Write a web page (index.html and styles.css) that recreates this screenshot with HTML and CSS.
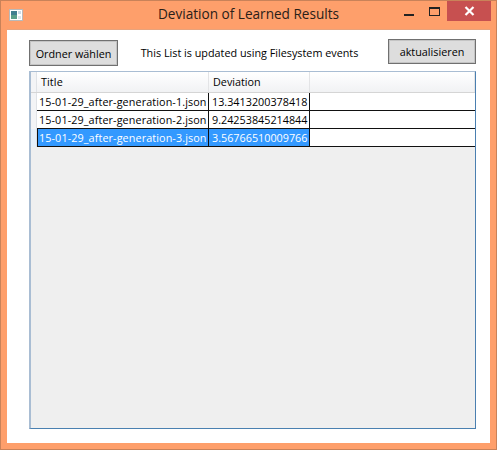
FILE: index.html
```html
<!doctype html>
<html>
<head>
 <meta http-equiv="Content-Type" content="text/html; charset=utf-8">
 <title>Deviation of Learned Results</title>
 <link rel="stylesheet" href="styles.css">
</head>

<body>
  <div class="window">
    <div class="titlebar">
      <svg class="appicon" width="14" height="12" viewBox="0 0 14 12">
        <rect x="0.5" y="0.5" width="13" height="11" fill="#fff" stroke="#b9b9b9"/>
        <rect x="2" y="2" width="6" height="8" fill="#3f7f8f"/>
        <rect x="2" y="6" width="6" height="4" fill="#5aa08a"/>
        <rect x="9" y="2" width="3" height="3" fill="#c9dbe6"/>
        <rect x="9" y="7" width="3" height="3" fill="#dbe6ec"/>
      </svg>
      <div class="wintitle">Deviation of Learned Results</div>
      <div class="controls">
        <div class="ctl"><div class="minimize"></div></div>
        <div class="ctl"><div class="maximize"></div></div>
        <div class="close">
          <svg width="11" height="10" viewBox="0 0 11 10"><path d="M1.5 1 L9.5 9 M9.5 1 L1.5 9" stroke="#fff" stroke-width="2.2"/></svg>
        </div>
      </div>
    </div>
    <div class="client">
      <div class="toolbar">
        <button class="btn btn-open">Ordner wählen</button>
        <div class="info">This List is updated using Filesystem events</div>
        <button class="btn btn-refresh">aktualisieren</button>
      </div>
      <div class="grid">
        <div class="row head">
          <div class="rowhead"></div>
          <div class="cell c1">Title</div>
          <div class="cell c2">Deviation</div>
          <div class="cell c3"></div>
        </div>
        <div class="row">
          <div class="rowhead"></div>
          <div class="cell c1">15-01-29_after-generation-1.json</div>
          <div class="cell c2">13.3413200378418</div>
          <div class="cell c3"></div>
        </div>
        <div class="row">
          <div class="rowhead"></div>
          <div class="cell c1">15-01-29_after-generation-2.json</div>
          <div class="cell c2">9.24253845214844</div>
          <div class="cell c3"></div>
        </div>
        <div class="row selected">
          <div class="rowhead"></div>
          <div class="cell c1">15-01-29_after-generation-3.json</div>
          <div class="cell c2">3.56766510009766</div>
          <div class="cell c3"></div>
        </div>
      </div>
    </div>
  </div>
</body>

</html>
```

FILE: styles.css
```css
html,body{margin:0;padding:0;}
body{width:497px;height:450px;overflow:hidden;font-family:'Open Sans','Noto Sans',sans-serif;font-size:10.8px;color:#000;}
.window{box-sizing:border-box;width:497px;height:450px;background:#fe9f6b;border:1px solid #c98259;display:flex;flex-direction:column;padding:0 6px 6px 6px;}
.titlebar{height:28px;flex:none;display:flex;align-items:center;margin:0 0 0 2px;}
.appicon{flex:none;margin:-1px 0 0 0;}
.wintitle{flex:1;text-align:center;font-size:13.6px;color:#2a2018;margin:0 0 3px 83px;}
.controls{flex:none;display:flex;align-self:flex-start;height:20px;margin:0 -1px 0 0;}
.ctl{width:28px;height:20px;position:relative;}
.minimize{position:absolute;left:13px;top:13px;width:10px;height:2px;background:#222;}
.maximize{position:absolute;left:10px;top:6px;width:9px;height:6px;border:1px solid #222;border-top-width:2px;}
.close{width:44px;height:20px;background:#c75050;display:flex;align-items:center;justify-content:center;}
.client{flex:1;background:#fff;padding:10px 14px 14px 22px;display:flex;flex-direction:column;border-top:1px solid #e8a37c;}
.toolbar{display:flex;align-items:center;height:26px;flex:none;margin:0 0 5px 0;}
.btn{box-sizing:border-box;height:26px;background:#dddddd;border:1px solid #707070;font:inherit;color:#000;padding:0;box-shadow:inset 0 0 0 1px #c4c4c4;}
.btn-open{width:89px;}
.btn-refresh{width:88px;height:25px;margin:0 0 3px 0;}
.info{flex:1;text-align:center;margin:-2px 7px 0 0;}
.grid{flex:1;box-sizing:border-box;background:#efefef;border:1px solid #a9bdd3;border-right-color:#4a7fb0;border-bottom:1px solid #4a80b0;border-left-width:2px;}
.row{display:flex;height:18px;}
.head{height:21px;box-sizing:border-box;background:linear-gradient(#fff,#f1f2f4);border-bottom:1px solid #d5d5d5;}
.rowhead{box-sizing:border-box;width:6px;flex:none;background:#f3f4f6;border-right:1px solid #dfe2e6;}
.cell{box-sizing:border-box;background:#fff;border-right:1px solid #111;border-bottom:1px solid #111;padding:0 0 0 2px;line-height:17px;white-space:nowrap;overflow:hidden;}
.c1{width:172px;letter-spacing:.1px;}
.c2{width:101px;padding-left:3px;}
.c3{flex:1;border-right:0;}
.head .cell{background:none;border-bottom:0;border-right:1px solid #e3e4e6;padding:0 0 0 4px;line-height:20px;}
.selected .c1,.selected .c2{background:#3399ff;color:#fff;}
.selected .c1{border-left:1px solid #111;padding-left:1px;}
.selected .rowhead{background:#e6f0fa;}
```
